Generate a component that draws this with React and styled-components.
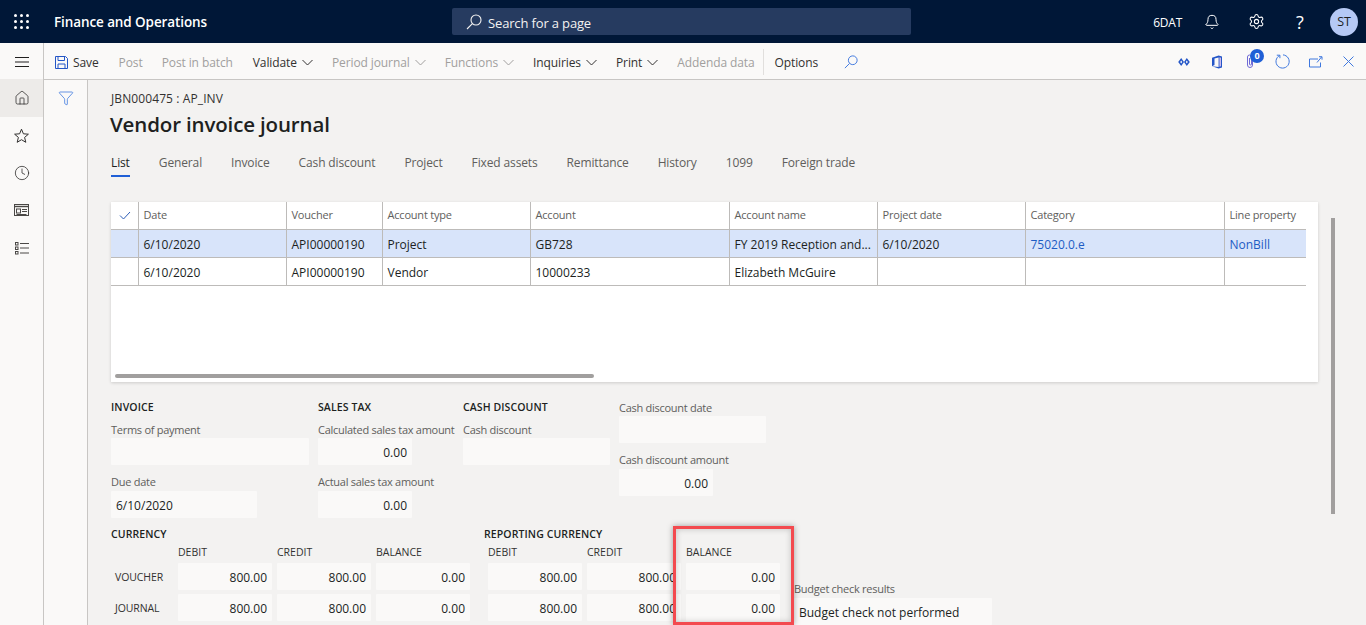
import React from "react";
import styled, { createGlobalStyle } from "styled-components";
import { Bell, Settings, Clock, Home, Filter } from "lucide-react";

const GlobalStyle = createGlobalStyle`
  html, body {
    margin: 0;
    height: 625px;
    overflow: hidden;
    background: #f3f2f1;
    font-family: "Open Sans", "Liberation Sans", sans-serif;
    font-size: 12px;
    color: #201f1e;
  }
  * { box-sizing: border-box; }
`;

const Shell = styled.div`
  display: flex;
  flex-direction: column;
  height: 625px;
  overflow: hidden;
`;

const TopBar = styled.header`
  display: flex;
  align-items: center;
  flex: 0 0 43px;
  background: #001737;
  color: #fff;
`;

const Waffle = styled.div`
  display: grid;
  grid-template-columns: repeat(3, 3px);
  gap: 3px;
  margin-left: 14px;
`;

const WaffleDot = styled.span`
  width: 3px;
  height: 3px;
  background: #fff;
  border-radius: 50%;
`;

const AppName = styled.div`
  width: 398px;
  margin-left: 25px;
  font-size: 13.5px;
  font-weight: 600;
  letter-spacing: -0.1px;
`;

const SearchBox = styled.div`
  display: flex;
  align-items: center;
  gap: 6px;
  width: 459px;
  height: 27px;
  padding-left: 14px;
  background: #263b60;
  border-radius: 2px;
  color: #f3f2f1;
`;

const SearchText = styled.span`
  padding-top: 2px;
  font-size: 13px;
  letter-spacing: -0.15px;
`;

const TopRight = styled.div`
  display: flex;
  align-items: center;
  margin-left: auto;
  padding-right: 8px;
`;

const Company = styled.span`
  margin-right: 8px;
  padding-top: 2px;
  letter-spacing: -0.25px;
`;

const TopIcon = styled.span`
  display: flex;
  justify-content: center;
  align-items: center;
  width: 44px;
  font-size: 18px;
`;

const Avatar = styled.span`
  display: flex;
  justify-content: center;
  align-items: center;
  width: 28px;
  height: 28px;
  margin-left: 8px;
  border-radius: 50%;
  background: #b5c9f5;
  color: #201f1e;
  font-size: 12.5px;
`;

const Body = styled.div`
  display: flex;
  flex: 1;
  min-height: 0;
`;

const Rail = styled.nav`
  flex: 0 0 44px;
  background: #faf9f8;
  border-right: 1px solid #c8c6c4;
`;

const RailItem = styled.div`
  display: flex;
  justify-content: center;
  align-items: center;
  height: ${(p) => (p.$menu ? "36px" : "37.6px")};
  padding-top: ${(p) => (p.$menu ? "2px" : "0")};
  color: #323130;
  background: ${(p) => (p.$active ? "#edebe9" : "transparent")};
`;

const Main = styled.div`
  display: flex;
  flex-direction: column;
  flex: 1;
  min-width: 0;
`;

const CommandBar = styled.div`
  display: flex;
  align-items: center;
  flex: 0 0 37px;
  padding: 1px 0 0 11px;
  background: #faf9f8;
  border-bottom: 1px solid #c8c6c4;
`;

const Command = styled.span`
  display: flex;
  align-items: center;
  gap: 5px;
  margin-right: ${(p) => p.$gap ?? 19}px;
  padding-top: 1px;
  white-space: nowrap;
  letter-spacing: -0.1px;
  color: ${(p) => (p.$disabled ? "#a19f9e" : "#323130")};
  font-weight: ${(p) => (p.$strong ? 500 : 400)};
`;

const CommandDivider = styled.span`
  width: 1px;
  height: 26px;
  margin-right: 11px;
  background: #e1dfdd;
`;

const CommandRight = styled.div`
  display: flex;
  margin-left: auto;
  padding-right: 1px;
`;

const CommandIcon = styled.span`
  position: relative;
  display: flex;
  justify-content: center;
  align-items: center;
  width: 33px;
  height: 20px;
  color: #3f78de;
`;

const CountBadge = styled.span`
  position: absolute;
  top: -3px;
  right: 2px;
  width: 14px;
  height: 14px;
  border-radius: 50%;
  background: #1f5fd6;
  color: #fff;
  font-size: 9px;
  font-weight: 700;
  line-height: 14px;
  text-align: center;
`;

const Workspace = styled.div`
  display: flex;
  flex: 1;
  min-height: 0;
`;

const FilterPane = styled.div`
  display: flex;
  justify-content: center;
  flex: 0 0 44px;
  padding-top: 10px;
  background: #faf9f8;
  border-right: 1px solid #c8c6c4;
  color: #2f6fdd;
`;

const Content = styled.main`
  position: relative;
  flex: 1;
  min-width: 0;
  padding: 10px 0 0 23px;
  overflow: hidden;
`;

const Caption = styled.div`
  height: 16px;
  line-height: 18px;
  font-size: 12px;
  letter-spacing: 0.1px;
  color: #323130;
`;

const Title = styled.h1`
  margin: 2px 0 0 -1px;
  height: 32px;
  line-height: 32px;
  font-size: 20.5px;
  font-weight: 600;
  letter-spacing: -0.15px;
  color: #201f1e;
`;

const Tabs = styled.div`
  display: flex;
  gap: 29px;
  margin-top: 10px;
`;

const Tab = styled.span`
  height: 27px;
  padding-top: 4px;
  line-height: 17px;
  letter-spacing: -0.13px;
  color: ${(p) => (p.$active ? "#201f1e" : "#605e5c")};
  border-bottom: 2px solid ${(p) => (p.$active ? "#1f5fd6" : "transparent")};
`;

const GridCard = styled.section`
  position: relative;
  width: 1207px;
  height: 180px;
  margin-top: 25px;
  background: #fff;
  box-shadow: 0 1px 3px rgba(0, 0, 0, 0.16);
`;

const GridRow = styled.div`
  display: grid;
  grid-template-columns: 28px 148px 96px 148px 199px 148px 148px 199px 81px;
  width: 1195px;
  height: 28px;
  background: ${(p) => (p.$selected ? "#d8e4fa" : "transparent")};
  border-bottom: 1px solid #bdbbb9;
`;

const GridCell = styled.div`
  display: flex;
  align-items: center;
  padding: ${(p) => (p.$head ? "0 0 2px 4.5px" : "1px 0 0 4.5px")};
  overflow: hidden;
  white-space: nowrap;
  letter-spacing: ${(p) => (p.$head ? "-0.2px" : "0")};
  font-size: ${(p) => (p.$head ? "11px" : "12px")};
  color: ${(p) => (p.$head ? "#605e5c" : p.$link ? "#1d5cc4" : "#201f1e")};
  border-right: ${(p) => (p.$last ? "none" : "1px solid #bdbbb9")};
`;

const CheckCell = styled(GridCell)`
  justify-content: center;
  padding: 0;
`;

const HScroll = styled.div`
  position: absolute;
  left: 4px;
  bottom: 4px;
  width: 479px;
  height: 4px;
  border-radius: 2px;
  background: #a19f9e;
`;

const VScroll = styled.div`
  position: absolute;
  top: 138px;
  left: 1243px;
  width: 4px;
  height: 296px;
  background: #a19f9e;
`;

const FormTop = styled.div`
  display: flex;
  margin-top: 17px;
  height: 127px;
`;

const FormGroup = styled.div`
  width: ${(p) => p.$w}px;
`;

const GroupTitle = styled.div`
  height: 17px;
  margin-bottom: 5px;
  line-height: 17px;
  font-size: 10.5px;
  font-weight: 600;
  letter-spacing: 0.1px;
  white-space: nowrap;
  color: #201f1e;
`;

const Field = styled.div`
  margin-bottom: 9px;
`;

const FieldLabel = styled.div`
  height: 17px;
  line-height: ${(p) => (p.$tight ? "16px" : "18px")};
  font-size: 11px;
  letter-spacing: -0.27px;
  white-space: nowrap;
  color: #605e5c;
`;

const Input = styled.div`
  width: ${(p) => p.$w ?? 94}px;
  height: 27px;
  padding: 0 5px;
  line-height: 29px;
  background: #faf9f8;
  border-radius: 1px;
  text-align: ${(p) => (p.$num ? "right" : "left")};
  white-space: nowrap;
  color: #201f1e;
`;

const FormBottom = styled.div`
  display: flex;
`;

const AmountGrid = styled.div`
  display: grid;
  grid-template-columns: ${(p) => (p.$labels ? "62px " : "")}94px 94px 94px;
  grid-auto-rows: auto;
  gap: 4px 5px;
  padding-left: ${(p) => (p.$labels ? 0 : 4)}px;
`;

const ColumnHead = styled.div`
  height: 15px;
  line-height: 17px;
  font-size: 10.5px;
  color: #323130;
`;

const RowLabel = styled.div`
  align-self: center;
  padding-left: 4px;
  font-size: 10.5px;
  letter-spacing: -0.1px;
  color: #323130;
`;

const CurrencyGroup = styled.div`
  width: 373px;
`;

const ReportingGroup = styled.div`
  position: relative;
  width: 310px;
`;

const SectionTitle = styled(GroupTitle)`
  margin-bottom: 1px;
`;

const BudgetField = styled.div`
  margin-top: 55px;
`;

const Highlight = styled.div`
  position: absolute;
  top: 0;
  left: 189px;
  width: 121px;
  height: 99px;
  border: 3px solid #f34a4f;
  box-shadow: 0 0 6px rgba(0, 0, 0, 0.35), inset 0 0 6px rgba(0, 0, 0, 0.2);
`;

const SearchGlass = ({ size = 15, color = "currentColor" }) => (
  <svg width={size} height={size} viewBox="0 0 16 16" fill="none" stroke={color} strokeWidth="1.1">
    <circle cx="10" cy="6" r="5" />
    <path d="M6.4 9.6 1 15" />
  </svg>
);

const Hamburger = () => (
  <svg width="14" height="10" viewBox="0 0 14 10" stroke="#201f1e" strokeWidth="1">
    <path d="M0 .5h14M0 5h14M0 9.5h14" />
  </svg>
);

const StarIcon = () => (
  <svg width="15" height="15" viewBox="0 0 15 15" fill="none" stroke="#323130" strokeWidth="1">
    <path d="M7.5 1.2 9.4 5.8l5 .4-3.8 3.2 1.2 4.9-4.3-2.6-4.3 2.6 1.2-4.9L.6 6.2l5-.4z" />
  </svg>
);

const WorkspaceIcon = () => (
  <svg width="15" height="13" viewBox="0 0 15 13" fill="none" stroke="#4a4846" strokeWidth="1">
    <rect x=".5" y=".5" width="14" height="11" />
    <path d="M.5 2.5h14" strokeWidth="1.4" />
    <rect x="2.5" y="5" width="4" height="4" />
    <path d="M8 5.5h5M8 7.5h5M2.5 10.5h10" />
  </svg>
);

const ModulesIcon = () => (
  <svg width="14" height="13" viewBox="0 0 14 13" fill="none" stroke="#4a4846" strokeWidth="1">
    <rect x=".5" y=".5" width="2.5" height="2.5" />
    <rect x=".5" y="5" width="2.5" height="2.5" />
    <rect x=".5" y="9.5" width="2.5" height="2.5" />
    <path d="M5 1.5h9M5 6h9M5 11h9" />
  </svg>
);

const SaveIcon = () => (
  <svg width="13" height="13" viewBox="0 0 13 13" fill="none" stroke="#2456c7" strokeWidth="1">
    <path d="M.5.5h10l2 2v10H.5z" />
    <path d="M3 .5v4h6.5v-4M3 12.5V8h7v4.5" />
  </svg>
);

const Chevron = ({ color }) => (
  <svg width="11" height="7" viewBox="0 0 11 7" fill="none" stroke={color} strokeWidth="1">
    <path d="m.5 1 5 5 5-5" />
  </svg>
);

const ConnectIcon = () => (
  <svg width="12" height="8" viewBox="0 0 12 8" fill="#2456c7">
    <path d="M3.2 0 6 4 3.2 8 .2 4zm0 2.6L2.2 4l1 1.4 1-1.4z" fillRule="evenodd" />
    <path d="M8.8 0 11.8 4 8.8 8 6 4zm0 2.6-1 1.4 1 1.4 1-1.4z" fillRule="evenodd" />
  </svg>
);

const OfficeIcon = () => (
  <svg width="12" height="14" viewBox="0 0 12 14">
    <path d="M1 2.8 7.6.4 11 1.6v10.8L7.6 13.6 1 11.2l6.6.9V2.6L3.5 3.6v6.5L1 11.2z" fill="#2456c7" />
    <path d="M8.4 2.2 10 2.8v8.4l-1.6.6z" fill="#c9b8ee" />
  </svg>
);

const ClipIcon = () => (
  <svg width="8" height="15" viewBox="0 0 8 15" fill="none" stroke="#6f6ad6" strokeWidth="1">
    <path d="M6.5 3.5V11a2.5 2.5 0 0 1-5 0V3a2 2 0 0 1 4 0v7a1 1 0 0 1-2 0V4" />
  </svg>
);

const RefreshIcon = () => (
  <svg width="15" height="15" viewBox="0 0 15 15" fill="none" stroke="#3f78de" strokeWidth="1">
    <path d="M4.6 1.6A6.6 6.6 0 1 0 8 .9" />
    <path d="M1.8 1.2h3.1v3" />
  </svg>
);

const OpenIcon = () => (
  <svg width="14" height="12" viewBox="0 0 14 12" fill="none" stroke="#3f78de" strokeWidth="1">
    <path d="M9 3H.5v8h11V6.5" />
    <path d="M8 6.5 12.5 1M10 .7h3v3" />
  </svg>
);

const CloseIcon = () => (
  <svg width="11" height="11" viewBox="0 0 11 11" fill="none" stroke="#3f78de" strokeWidth="1">
    <path d="m.5.5 10 10M10.5.5l-10 10" />
  </svg>
);

const CheckMark = () => (
  <svg width="12" height="9" viewBox="0 0 12 9" fill="none" stroke="#2f5fb8" strokeWidth="1">
    <path d="m1 4.5 3.5 3.5L11 1" />
  </svg>
);

const commands = [
  { label: "Post", disabled: true },
  { label: "Post in batch", disabled: true, gap: 20 },
  { label: "Validate", menu: true },
  { label: "Period journal", disabled: true, menu: true },
  { label: "Functions", disabled: true, menu: true },
  { label: "Inquiries", menu: true },
  { label: "Print", menu: true },
  { label: "Addenda data", disabled: true, gap: 8 },
];

const tabs = ["List", "General", "Invoice", "Cash discount", "Project", "Fixed assets", "Remittance", "History", "1099", "Foreign trade"];

const columns = ["Date", "Voucher", "Account type", "Account", "Account name", "Project date", "Category", "Line property"];

const rows = [
  { selected: true, cells: ["6/10/2020", "API00000190", "Project", "GB728", "FY 2019 Reception and...", "6/10/2020", "75020.0.e", "NonBill"] },
  { selected: false, cells: ["6/10/2020", "API00000190", "Vendor", "10000233", "Elizabeth McGuire", "", "", ""] },
];

const Amounts = ({ labels }) => (
  <AmountGrid $labels={labels}>
    {labels && <span />}
    <ColumnHead>DEBIT</ColumnHead>
    <ColumnHead>CREDIT</ColumnHead>
    <ColumnHead>BALANCE</ColumnHead>
    {["VOUCHER", "JOURNAL"].map((name) => (
      <React.Fragment key={name}>
        {labels && <RowLabel>{name}</RowLabel>}
        <Input $num>800.00</Input>
        <Input $num>800.00</Input>
        <Input $num>0.00</Input>
      </React.Fragment>
    ))}
  </AmountGrid>
);

export default function App() {
  return (
    <Shell>
      <GlobalStyle />
      <TopBar>
        <Waffle>
          {Array.from({ length: 9 }, (_, i) => (
            <WaffleDot key={i} />
          ))}
        </Waffle>
        <AppName>Finance and Operations</AppName>
        <SearchBox>
          <SearchGlass size={16} />
          <SearchText>Search for a page</SearchText>
        </SearchBox>
        <TopRight>
          <Company>6DAT</Company>
          <TopIcon>
            <Bell size={16} strokeWidth={1.5} />
          </TopIcon>
          <TopIcon>
            <Settings size={17} strokeWidth={1.5} />
          </TopIcon>
          <TopIcon>?</TopIcon>
          <Avatar>ST</Avatar>
        </TopRight>
      </TopBar>
      <Body>
        <Rail>
          <RailItem $menu>
            <Hamburger />
          </RailItem>
          <RailItem $active>
            <Home size={16} strokeWidth={1.2} />
          </RailItem>
          <RailItem>
            <StarIcon />
          </RailItem>
          <RailItem>
            <Clock size={16} strokeWidth={1.2} />
          </RailItem>
          <RailItem>
            <WorkspaceIcon />
          </RailItem>
          <RailItem>
            <ModulesIcon />
          </RailItem>
        </Rail>
        <Main>
          <CommandBar>
            <Command $gap={20}>
              <SaveIcon />
              Save
            </Command>
            {commands.map((c) => (
              <Command key={c.label} $disabled={c.disabled} $gap={c.gap}>
                {c.label}
                {c.menu && <Chevron color={c.disabled ? "#a19f9e" : "#323130"} />}
              </Command>
            ))}
            <CommandDivider />
            <Command $strong $gap={26}>Options</Command>
            <SearchGlass size={14} color="#3f78de" />
            <CommandRight>
              <CommandIcon>
                <ConnectIcon />
              </CommandIcon>
              <CommandIcon>
                <OfficeIcon />
              </CommandIcon>
              <CommandIcon>
                <ClipIcon />
                <CountBadge>0</CountBadge>
              </CommandIcon>
              <CommandIcon>
                <RefreshIcon />
              </CommandIcon>
              <CommandIcon>
                <OpenIcon />
              </CommandIcon>
              <CommandIcon>
                <CloseIcon />
              </CommandIcon>
            </CommandRight>
          </CommandBar>
          <Workspace>
            <FilterPane>
              <Filter size={16} strokeWidth={1.1} />
            </FilterPane>
            <Content>
              <Caption>JBN000475 : AP_INV</Caption>
              <Title>Vendor invoice journal</Title>
              <Tabs>
                {tabs.map((t, i) => (
                  <Tab key={t} $active={i === 0}>{t}</Tab>
                ))}
              </Tabs>
              <GridCard>
                <GridRow>
                  <CheckCell $head>
                    <CheckMark />
                  </CheckCell>
                  {columns.map((c, i) => (
                    <GridCell key={c} $head $last={i === columns.length - 1}>{c}</GridCell>
                  ))}
                </GridRow>
                {rows.map((r) => (
                  <GridRow key={r.cells[2]} $selected={r.selected}>
                    <CheckCell />
                    {r.cells.map((c, i) => (
                      <GridCell key={i} $link={i >= 6} $last={i === r.cells.length - 1}>{c}</GridCell>
                    ))}
                  </GridRow>
                ))}
                <HScroll />
              </GridCard>
              <FormTop>
                <FormGroup $w={207}>
                  <GroupTitle>INVOICE</GroupTitle>
                  <Field>
                    <FieldLabel>Terms of payment</FieldLabel>
                    <Input $w={198} />
                  </Field>
                  <Field>
                    <FieldLabel $tight>Due date</FieldLabel>
                    <Input $w={146}>6/10/2020</Input>
                  </Field>
                </FormGroup>
                <FormGroup $w={145}>
                  <GroupTitle>SALES TAX</GroupTitle>
                  <Field>
                    <FieldLabel>Calculated sales tax amount</FieldLabel>
                    <Input $num>0.00</Input>
                  </Field>
                  <Field>
                    <FieldLabel $tight>Actual sales tax amount</FieldLabel>
                    <Input $num>0.00</Input>
                  </Field>
                </FormGroup>
                <FormGroup $w={156}>
                  <GroupTitle>CASH DISCOUNT</GroupTitle>
                  <Field>
                    <FieldLabel>Cash discount</FieldLabel>
                    <Input $w={147} />
                  </Field>
                </FormGroup>
                <FormGroup $w={156}>
                  <Field>
                    <FieldLabel>Cash discount date</FieldLabel>
                    <Input $w={147} />
                  </Field>
                  <Field>
                    <FieldLabel $tight>Cash discount amount</FieldLabel>
                    <Input $num>0.00</Input>
                  </Field>
                </FormGroup>
              </FormTop>
              <FormBottom>
                <CurrencyGroup>
                  <SectionTitle>CURRENCY</SectionTitle>
                  <Amounts labels />
                </CurrencyGroup>
                <ReportingGroup>
                  <SectionTitle>REPORTING CURRENCY</SectionTitle>
                  <Amounts />
                  <Highlight />
                </ReportingGroup>
                <BudgetField>
                  <FieldLabel $tight>Budget check results</FieldLabel>
                  <Input $w={198}>Budget check not performed</Input>
                </BudgetField>
              </FormBottom>
              <VScroll />
            </Content>
          </Workspace>
        </Main>
      </Body>
    </Shell>
  );
}
